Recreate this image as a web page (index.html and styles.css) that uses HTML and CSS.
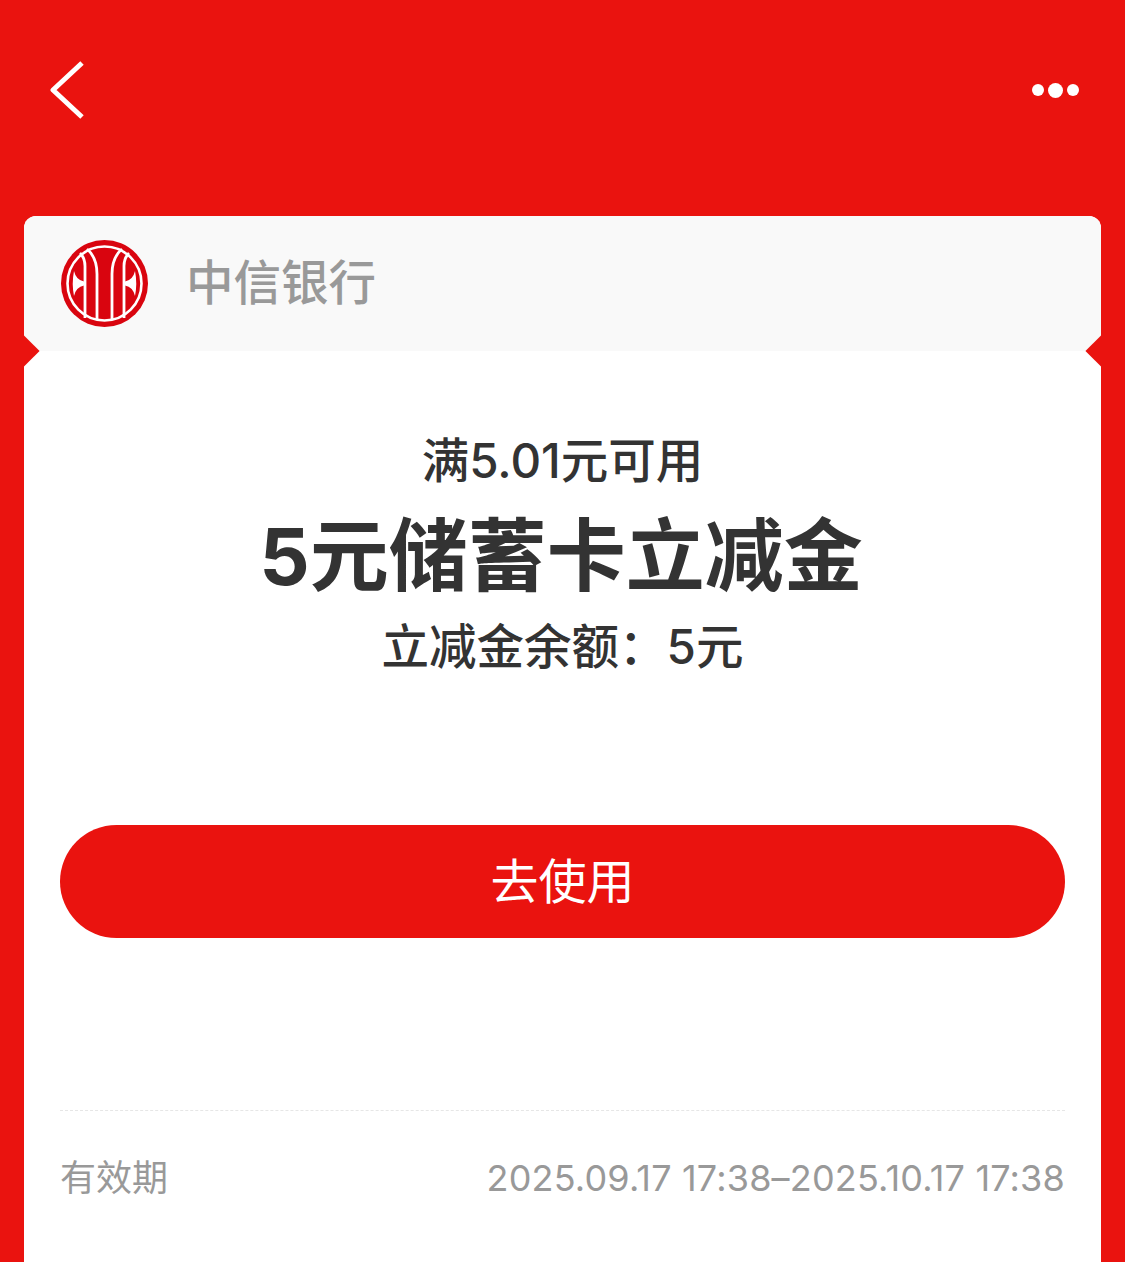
FILE: index.html
```html
<!DOCTYPE html>
<html lang="zh-CN">
<head>
  <meta charset="UTF-8">
  <meta name="viewport" content="width=device-width, initial-scale=1.0">
  <title>立减金详情</title>
  <link rel="stylesheet" href="styles.css">
</head>
<body>
  <div class="topbar">
    <svg class="back" width="34" height="58" viewBox="0 0 34 58"><path d="M32 2 L3 29 L32 56" fill="none" stroke="#fff" stroke-width="5" stroke-linejoin="round"/></svg>
    <div class="more">
      <span class="dot"></span>
      <span class="dot big"></span>
      <span class="dot"></span>
    </div>
  </div>

  <div class="card">
    <span class="notch left"></span>
    <span class="notch right"></span>

    <div class="card-head">
      <svg class="logo" width="87" height="87" viewBox="0 0 87 87">
        <circle cx="43.5" cy="43.5" r="43.5" fill="#d9050f"/>
        <circle cx="43.5" cy="43.5" r="37" fill="none" stroke="#fff" stroke-width="2.6"/>
        <g fill="none" stroke="#fff" stroke-width="2.8">
          <path d="M36 80 V34 C36 23 33 15 26 9"/>
          <path d="M51 80 V34 C51 23 54 15 61 9"/>
          <path d="M24 78 V26 C24 21 22 16 19 13"/>
          <path d="M63 78 V26 C63 21 65 16 68 13"/>
        </g>
        <path d="M13 31 Q15 40 23 41.5 L23 45.5 Q15 47 13 56 Q10.5 43.5 13 31 Z" fill="#fff"/>
        <path d="M74 31 Q72 40 64 41.5 L64 45.5 Q72 47 74 56 Q76.5 43.5 74 31 Z" fill="#fff"/>
      </svg>
      <span class="bank">中信银行</span>
    </div>

    <div class="card-body">
      <p class="limit">满5.01元可用</p>
      <h1 class="title">5元储蓄卡立减金</h1>
      <p class="balance">立减金余额：5元</p>
      <button class="use-btn"><span class="use-label">去使用</span></button>
      <div class="valid">
        <span>有效期</span>
        <span class="valid-date">2025.09.17 17:38–2025.10.17 17:38</span>
      </div>
    </div>
  </div>
</body>
</html>
```

FILE: styles.css
```css
html, body {
  margin: 0;
  height: 1262px;
  overflow: hidden;
}
body {
  background: #ea130f;
  font-family: Inter, "Noto Sans CJK SC", sans-serif;
  color: #333;
}
.topbar {
  height: 216px;
  padding: 61px 46px 0 50px;
  box-sizing: border-box;
  display: flex;
  justify-content: space-between;
  align-items: flex-start;
}
.more {
  display: flex;
  align-items: center;
  gap: 4px;
  height: 58px;
}
.dot {
  width: 12px;
  height: 12px;
  border-radius: 50%;
  background: #fff;
}
.dot.big {
  width: 15px;
  height: 15px;
}
.card {
  position: relative;
  margin: 0 24px;
  height: 1046px;
  background: #fff;
  border-radius: 12px 12px 0 0;
  overflow: hidden;
}
.notch {
  position: absolute;
  top: 124px;
  width: 22px;
  height: 22px;
  background: #ea130f;
  transform: rotate(45deg);
  z-index: 1;
}
.notch.left {
  left: -11px;
}
.notch.right {
  right: -11px;
}
.card-head {
  height: 135px;
  background: #f9f9f9;
  display: flex;
  align-items: center;
  padding-left: 37px;
  gap: 38px;
}
.bank {
  font-family: "Noto Sans CJK SC", sans-serif;
  font-size: 47.5px;
  font-weight: 500;
  line-height: 60px;
  margin-bottom: 7px;
  color: #999;
}
.card-body {
  padding: 80px 36px 0;
  text-align: center;
}
.limit {
  margin: 0;
  font-size: 47.5px;
  font-weight: 500;
  line-height: 60px;
}
.title {
  margin: 15px 0 11px;
  padding-right: 3px;
  font-size: 79px;
  line-height: 100px;
  font-weight: 700;
}
.balance {
  margin: 0;
  font-size: 47.5px;
  font-weight: 500;
  line-height: 60px;
}
.use-btn {
  display: block;
  width: 100%;
  height: 113px;
  margin-top: 148px;
  padding: 0 0 8px;
  border: none;
  border-radius: 57px;
  background: #ea130f;
  color: #fff;
  font-family: inherit;
  font-size: 48px;
}
.valid {
  margin-top: 172px;
  border-top: 1px dashed #e6e6e6;
  padding-top: 42px;
  display: flex;
  justify-content: space-between;
  font-size: 36px;
  line-height: 50px;
  color: #999;
}
.valid-date {
  letter-spacing: 0.18px;
}
```
